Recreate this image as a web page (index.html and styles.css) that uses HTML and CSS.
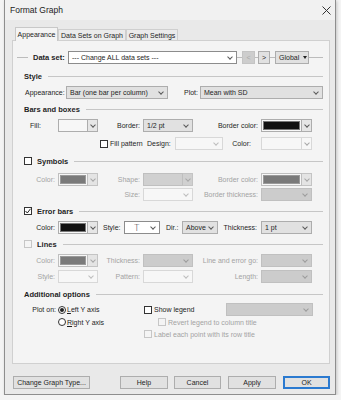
FILE: index.html
```html
<!DOCTYPE html>
<html lang="en">
<head>
    <meta charset="UTF-8">
    <title>Format Graph</title>
    <link rel="stylesheet" href="styles.css">
</head>
<body>
<div class="dialog">
    <div class="titlebar">
        <span class="title">Format Graph</span>
        <svg class="close" width="9" height="9" viewBox="0 0 9 9"><path d="M0.5 0.5L8.5 8.5M8.5 0.5L0.5 8.5" stroke="#333" stroke-width="1" fill="none"/></svg>
    </div>

    <div class="tabs">
        <span class="tab active">Appearance</span>
        <span class="tab t2">Data Sets on Graph</span>
        <span class="tab t3">Graph Settings</span>
    </div>

    <div class="panel">
        <!-- data set picker -->
        <div class="datarow">
            <span class="rule r-a"></span>
            <b class="ds-label">Data set:</b>
            <span class="combo edit ds-combo">--- Change ALL data sets ---</span>
            <span class="rule r-b"></span>
            <span class="sbtn off prev">&lt;</span>
            <span class="rule r-c"></span>
            <span class="sbtn next">&gt;</span>
            <span class="rule r-b"></span>
            <span class="sbtn global">Global <i class="tri"></i></span>
            <span class="rule r-e"></span>
        </div>

        <div class="sec m7">Style</div>
        <div class="row m5">
            <span class="app-lb">Appearance:</span>
            <span class="combo app-combo">Bar (one bar per column)</span>
            <span class="plot-lb">Plot:</span>
            <span class="combo plot-combo">Mean with SD</span>
        </div>

        <div class="sec m5">Bars and boxes</div>
        <div class="grow m5">
            <span class="lb fill-lb">Fill:</span>
            <span class="pick"><span class="fld"></span><span class="ab"></span></span>
            <span class="lb">Border:</span>
            <span class="combo">1/2 pt</span>
            <span class="lb">Border color:</span>
            <span class="pick"><span class="fld"><span class="sw"></span></span><span class="ab"></span></span>
        </div>
        <div class="row m5">
            <span class="cb fp-cb"></span>
            <span class="fp-txt">Fill pattern</span>
            <span class="design-lb">Design:</span>
            <span class="combo lite design-combo"></span>
            <span class="fpc-lb">Color:</span>
            <span class="pick lite w51"><span class="fld"></span><span class="ab"></span></span>
        </div>

        <div class="sec m6"><span class="cb"></span><span class="sec-t">Symbols</span></div>
        <div class="grow dim m7">
            <span class="lb">Color:</span>
            <span class="pick dis"><span class="fld"><span class="sw grey"></span></span><span class="ab"></span></span>
            <span class="lb">Shape:</span>
            <span class="pick dis solid"><span class="fld"></span><span class="ab"></span></span>
            <span class="lb">Border color:</span>
            <span class="pick dis"><span class="fld"><span class="sw grey"></span></span><span class="ab"></span></span>
        </div>
        <div class="grow dim m2">
            <span></span>
            <span></span>
            <span class="lb">Size:</span>
            <span class="combo lite"></span>
            <span class="lb">Border thickness:</span>
            <span class="combo dis"></span>
        </div>

        <div class="sec m5"><span class="cb on"><svg width="6" height="6" viewBox="0 0 6 6"><path d="M0.5 3L2.3 5L5.5 0.8" stroke="#222" stroke-width="1" fill="none"/></svg></span><span class="sec-t">Error bars</span></div>
        <div class="row m5">
            <span class="eb-lb">Color:</span>
            <span class="pick w40"><span class="fld"><span class="sw"></span></span><span class="ab"></span></span>
            <span class="st-lb">Style:</span>
            <span class="combo edit st-combo"><span class="tee">T</span></span>
            <span class="dir-lb">Dir.:</span>
            <span class="combo dir-combo">Above</span>
            <span class="th-lb">Thickness:</span>
            <span class="combo w51">1 pt</span>
        </div>

        <div class="sec m5"><span class="cb off"></span><span class="sec-t">Lines</span></div>
        <div class="grow dim m5">
            <span class="lb">Color:</span>
            <span class="pick dis"><span class="fld"><span class="sw grey"></span></span><span class="ab"></span></span>
            <span class="lb">Thickness:</span>
            <span class="combo dis"></span>
            <span class="lb">Line and error go:</span>
            <span class="combo dis"></span>
        </div>
        <div class="grow dim m3">
            <span class="lb">Style:</span>
            <span class="combo lite"></span>
            <span class="lb">Pattern:</span>
            <span class="combo lite"></span>
            <span class="lb">Length:</span>
            <span class="combo dis"></span>
        </div>

        <div class="sec m6">Additional options</div>
        <div class="opt m4">
            <span class="plot-on">Plot on:</span>
            <span class="rd on"></span>
            <span class="rtxt"><u>L</u>eft Y axis</span>
            <span class="cb"></span>
            <span class="ctxt">Show legend</span>
            <span class="combo dis legend"></span>
        </div>
        <div class="opt">
            <span class="plot-on"></span>
            <span class="rd"></span>
            <span class="rtxt"><u>R</u>ight Y axis</span>
            <span class="cb off ind"></span>
            <span class="ctxt dim">Revert legend to column title</span>
        </div>
        <div class="opt">
            <span class="lead"></span>
            <span class="cb off"></span>
            <span class="ctxt dim">Label each point with its row title</span>
        </div>
    </div>

    <div class="footer">
        <span class="btn change">Change Graph Type...</span>
        <span class="btn help">Help</span>
        <span class="btn cancel">Cancel</span>
        <span class="btn apply">Apply</span>
        <span class="btn ok">OK</span>
    </div>
</div>
</body>
</html>
```

FILE: styles.css
```css
* {
    box-sizing: border-box;
}

body {
    margin: 0;
    background: #f4f4f4;
    font-family: "Liberation Sans", Arial, sans-serif;
    font-size: 7px;
    color: #1e1e1e;
}

.dialog {
    margin-left: 4px;
    width: 332px;
    height: 395px;
    background: #e9e9e9;
    border: 1px solid #8e8e8e;
    border-top: none;
    box-shadow: 1px 1px 3px rgba(0, 0, 0, 0.2);
}

.titlebar {
    height: 20px;
    display: flex;
    align-items: center;
    padding: 0 4px 0 5px;
    background: #f1f1f1;
}

.title {
    font-size: 8.5px;
    color: #222;
}

.close {
    margin-left: auto;
}

/* tabs */
.tabs {
    display: flex;
    align-items: flex-end;
    height: 13px;
    margin-top: 7px;
    padding-left: 10px;
}

.tab {
    display: flex;
    align-items: center;
    justify-content: center;
    height: 11px;
    border: 1px solid #cfcfcf;
    border-bottom: none;
    background: #ebebeb;
    white-space: nowrap;
}

.tab.active {
    position: relative;
    width: 43px;
    height: 14px;
    margin-bottom: -1px;
    background: #f4f4f4;
    border-color: #c8c8c8;
}

.t2 {
    width: 68px;
}

.t3 {
    width: 52px;
}

.panel {
    margin-left: 7px;
    width: 318px;
    height: 324px;
    border: 1px solid #d0d0d0;
    background: #f4f4f4;
}

/* spacing helpers */
.m2 { margin-top: 2px; }
.m3 { margin-top: 3px; }
.m4 { margin-top: 4px; }
.m5 { margin-top: 5px; }
.m6 { margin-top: 6px; }
.m7 { margin-top: 7px; }

.rule {
    height: 1px;
    background: #bcbcbc;
}

.datarow {
    display: flex;
    align-items: center;
    height: 13px;
    margin-top: 10px;
}

.r-a { margin-left: 4px; width: 11px; }
.r-b { width: 5px; }
.r-c { width: 3px; }
.r-e { flex: 1; margin-right: 6px; }

.ds-label {
    margin-left: 5px;
    width: 35px;
    font-size: 7.5px;
}

.ds-combo { width: 169px; }

.sbtn {
    display: flex;
    align-items: center;
    justify-content: center;
    height: 13px;
    border: 1px solid #adadad;
    background: #e1e1e1;
}

.sbtn.off {
    background: #cdcdcd;
    border-color: #c4c4c4;
    color: #a8a8a8;
}

.prev { width: 13px; }
.next { width: 12px; }

.global {
    width: 34px;
    justify-content: flex-start;
    padding-left: 3px;
}

.tri {
    margin-left: 4px;
    border-left: 2px solid transparent;
    border-right: 2px solid transparent;
    border-top: 3px solid #222;
}

/* combo boxes */
.combo {
    display: flex;
    align-items: center;
    height: 13px;
    padding-left: 3px;
    border: 1px solid #adadad;
    background: #e1e1e1;
    white-space: nowrap;
    overflow: hidden;
}

.combo::after,
.ab::after {
    content: "";
    flex: none;
    width: 3px;
    height: 3px;
    margin-top: -2px;
    border-right: 1px solid #5a5a5a;
    border-bottom: 1px solid #5a5a5a;
    transform: rotate(45deg);
}

.combo::after {
    margin-left: auto;
    margin-right: 4px;
}

.combo.edit {
    background: #fff;
    border-color: #8c8c8c;
}

.combo.dis {
    background: #cccccc;
    border-color: #c0c0c0;
}

.combo.dis::after {
    border-color: #9c9c9c;
}

.combo.lite {
    background: #f7f7f7;
    border-color: #d8d8d8;
}

.combo.lite::after {
    border-color: #bdbdbd;
}

.pick {
    display: flex;
    height: 13px;
}

.pick .fld {
    flex: 1;
    padding: 1px;
    border: 1px solid #adadad;
    background: #f7f7f7;
}

.pick .ab {
    display: flex;
    align-items: center;
    justify-content: center;
    width: 10px;
    border: 1px solid #adadad;
    border-left: none;
    background: #e6e6e6;
}

.sw {
    display: block;
    height: 100%;
    background: #111;
    border: 1px solid #777;
}

.sw.grey {
    background: #7a7a7a;
    border-color: #9a9a9a;
}

.pick.dis .fld {
    border-color: #bfbfbf;
}

.pick.dis .ab {
    border-color: #c4c4c4;
    background: #e4e4e4;
}

.pick.dis .ab::after,
.pick.lite .ab::after {
    border-color: #a8a8a8;
}

.pick.solid .fld,
.pick.solid .ab {
    background: #d0d0d0;
}

.pick.lite .fld,
.pick.lite .ab {
    border-color: #d8d8d8;
    background: #f7f7f7;
}

/* section headers */
.sec {
    display: flex;
    align-items: center;
    height: 10px;
    padding: 0 6px 0 11px;
    font-weight: bold;
    font-size: 7.5px;
}

.sec::after {
    content: "";
    flex: 1;
    height: 1px;
    margin-left: 6px;
    background: #c6c6c6;
}

.sec-t {
    margin-left: 5px;
}

/* generic rows */
.row {
    display: flex;
    align-items: center;
    height: 13px;
}

.grow {
    display: grid;
    grid-template-columns: 45px 40px 45px 50px 68px 51px;
    align-items: center;
    height: 13px;
}

.grow .combo,
.grow .pick {
    height: 13px;
}

.lb {
    text-align: right;
    padding-right: 3px;
    white-space: nowrap;
}

.fill-lb {
    text-align: left;
    padding-left: 17px;
}

.dim {
    color: #a3a3a3;
}

.app-lb {
    margin-left: 12px;
    width: 41px;
}

.app-combo { width: 102px; }

.plot-lb {
    margin-left: 16px;
    width: 16px;
}

.plot-combo { width: 123px; }

.fp-cb { margin-left: 87px; }

.fp-txt {
    width: 39px;
    padding-left: 2px;
}

.design-lb { width: 28px; }
.design-combo { width: 48px; }

.fpc-lb {
    width: 38px;
    text-align: right;
    padding-right: 10px;
}

.w51 { width: 51px; }
.w40 { width: 40px; }

.eb-lb {
    width: 45px;
    text-align: right;
    padding-right: 3px;
}

.st-lb {
    margin-left: 5px;
    width: 21px;
}

.st-combo { width: 36px; }

.tee {
    margin-left: 6px;
    font-size: 9px;
    font-family: "DejaVu Sans", sans-serif;
    font-weight: 200;
}

.dir-lb {
    margin-left: 6px;
    width: 16px;
}

.dir-combo { width: 36px; }

.th-lb {
    width: 43px;
    text-align: right;
    padding-right: 4px;
}

/* check boxes and radios */
.cb {
    display: flex;
    align-items: center;
    justify-content: center;
    flex: none;
    width: 8px;
    height: 8px;
    border: 1px solid #333;
    background: #fff;
}

.cb.off {
    border-color: #c6c6c6;
    background: #f4f4f4;
}

.rd {
    display: flex;
    align-items: center;
    justify-content: center;
    flex: none;
    width: 8px;
    height: 8px;
    border: 1px solid #333;
    border-radius: 50%;
    background: #fff;
}

.rd.on::after {
    content: "";
    width: 4px;
    height: 4px;
    border-radius: 50%;
    background: #222;
}

.opt {
    display: flex;
    align-items: center;
    height: 12px;
}

.opt.m4 {
    height: 13px;
}

.plot-on {
    width: 45px;
    text-align: right;
    padding-right: 2px;
}

.rtxt {
    width: 78px;
    padding-left: 1px;
}

.ctxt {
    width: 74px;
    padding-left: 2px;
    white-space: nowrap;
}

.ind { margin-left: 14px; }
.lead { width: 131px; }

.legend { width: 87px; }

/* bottom buttons */
.footer {
    display: flex;
    margin-top: 12px;
    padding-left: 8px;
}

.btn {
    display: flex;
    align-items: center;
    justify-content: center;
    height: 13px;
    border: 1px solid #adadad;
    background: #e1e1e1;
    white-space: nowrap;
}

.change { width: 77px; }
.help { width: 48px; margin-left: 30px; }
.cancel { width: 47px; margin-left: 6px; }
.apply { width: 48px; margin-left: 7px; }

.ok {
    width: 47px;
    margin-left: 7px;
    border-color: #2b7ad0;
    box-shadow: inset 0 0 0 1px #2b7ad0;
}
```
